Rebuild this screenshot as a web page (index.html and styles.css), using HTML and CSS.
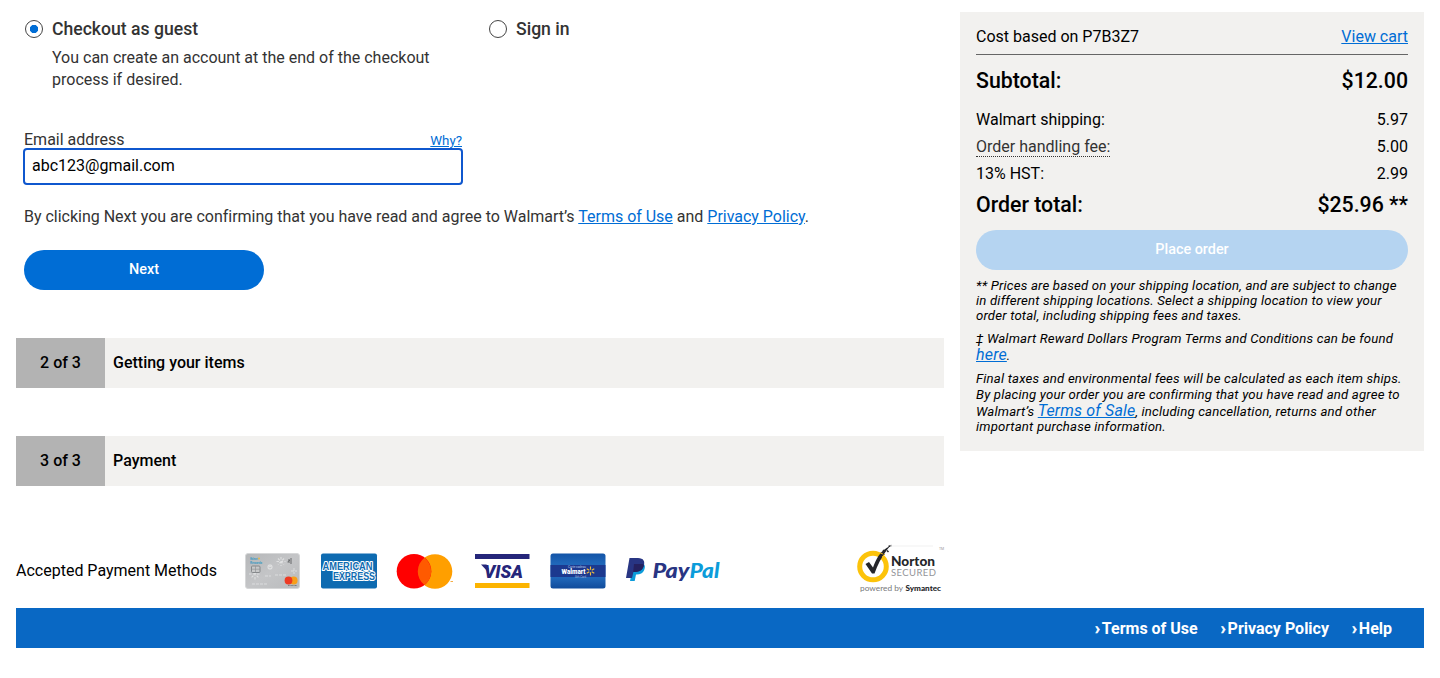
FILE: index.html
```html
<!DOCTYPE html>
<html lang="en">
<head>
<meta charset="utf-8">
<title>Checkout</title>
<link rel="stylesheet" href="styles.css">
</head>
<body>
<div class="page">
  <div class="columns">
    <main class="main">
      <section class="guest">
        <div class="options">
          <div class="option">
            <span class="radio radio-on"></span>
            <div>
              <div class="option-title">Checkout as guest</div>
              <p class="option-note">You can create an account at the end of the checkout process if desired.</p>
            </div>
          </div>
          <div class="option">
            <span class="radio"></span>
            <div class="option-title">Sign in</div>
          </div>
        </div>
        <div class="field">
          <div class="field-head"><label for="email">Email address</label><a class="why" href="#">Why?</a></div>
          <input class="field-input" id="email" type="text" value="abc123@gmail.com">
        </div>
        <p class="agree">By clicking Next you are confirming that you have read and agree to Walmart’s <a href="#">Terms of Use</a> and <a href="#">Privacy Policy</a>.</p>
        <button class="btn btn-next">Next</button>
      </section>
      <div class="step"><span class="step-num">2 of 3</span><span class="step-name">Getting your items</span></div>
      <div class="step"><span class="step-num">3 of 3</span><span class="step-name">Payment</span></div>
      <div class="payments">
        <span class="payments-label">Accepted Payment Methods</span>
        <svg class="card" width="56" height="36" viewBox="0 0 56 36">
          <defs><linearGradient id="silver" x1="0" x2="1" y1="0" y2="1"><stop offset="0" stop-color="#b5b7b9"/><stop offset=".5" stop-color="#c4c5c7"/><stop offset="1" stop-color="#b9bbbd"/></linearGradient></defs>
          <rect x=".5" y=".5" width="54" height="35" rx="2.5" fill="url(#silver)" stroke="#d6d7d8"/>
          <g stroke="#dfe0e1" stroke-width="1.1">
            <path d="M36 4v9M31.500 8.500h9M33 5.500l6 6M39 5.500l-6 6M10 16v11M4 21h12M6 17l8 8M14 17l-8 8M25 11v6M22 14h6M23 12l4 4M27 12l-4 4" stroke-dasharray="2.500 1.500"/>
            <path d="M49 15v6M46 18h6M20 23h6M30 22h12M7 31h16" stroke-dasharray="3 1" stroke-width=".9"/>
          </g>
          <rect x="6.500" y="13" width="8.500" height="6.500" rx="1" fill="#c8c9ca" stroke="#85888a"/>
          <path d="M10.500 13v6.500M6.500 16.200h8.500" stroke="#929496" stroke-width=".7"/>
          <text x="5" y="6.700" font-size="3.500" font-weight="700" fill="#3e9ac1" textLength="8" lengthAdjust="spacingAndGlyphs">Walmart</text>
          <text x="5" y="10.500" font-size="3.500" font-weight="700" fill="#3e9ac1" textLength="12" lengthAdjust="spacingAndGlyphs">Rewards</text>
          <circle cx="14" cy="5.500" r="1" fill="#e2b84f"/>
          <path d="M42.500 9l2.500-2M44 10V6M46 11V5" stroke="#66696b"/>
          <circle cx="48.700" cy="27.500" r="3.900" fill="#f79f1a"/><circle cx="43.500" cy="27.500" r="3.900" fill="#ed3a23"/>
          <path d="M43 32.500h9" stroke="#6b6d6f" stroke-width=".8" stroke-dasharray="1 .4"/>
        </svg>
        <svg class="card" width="56" height="36" viewBox="0 0 56 36">
          <rect y=".5" width="56" height="35" rx="2" fill="#0e6bb1"/>
          <g class="amex" fill="#0e6bb1" stroke="#fff" stroke-width="2.200" stroke-linejoin="round">
            <text x="1.500" y="16.500" textLength="50" lengthAdjust="spacingAndGlyphs">AMERICAN</text>
            <text x="12" y="27" textLength="42" lengthAdjust="spacingAndGlyphs">EXPRESS</text>
          </g>
        </svg>
        <svg class="card" width="56" height="36" viewBox="0 0 56 36">
          <circle cx="38" cy="18.500" r="17.300" fill="#ff9f00"/><circle cx="17" cy="18.200" r="17.300" fill="#f00"/>
          <path d="M27.500 4.700a17.300 17.300 0 0 1 0 27.400a17.300 17.300 0 0 1 0-27.400z" fill="#ff5a00"/>
          <path d="M53.500 28.500h2.500" stroke="#f5ad45"/>
        </svg>
        <svg class="card" width="56" height="36" viewBox="0 0 56 36">
          <rect x="1" y="1" width="54.500" height="5" fill="#25267a"/><rect x="1" y="30" width="54.500" height="5" fill="#fcb400"/>
          <path d="M7 11.500h5.500l2 4v4z" fill="#25267a"/>
          <text x="10" y="24.800" font-size="18" font-weight="900" font-style="italic" fill="#25267a" textLength="39" lengthAdjust="spacingAndGlyphs">VISA</text>
        </svg>
        <svg class="card" width="56" height="36" viewBox="0 0 56 36">
          <defs><linearGradient id="gift" x1="0" x2="0" y1="0" y2="1"><stop offset="0" stop-color="#1354a7"/><stop offset=".28" stop-color="#2067b9"/><stop offset=".7" stop-color="#2067b9"/><stop offset="1" stop-color="#104b9b"/></linearGradient></defs>
          <rect x=".5" y=".5" width="55" height="35" rx="2.500" fill="url(#gift)"/>
          <rect x=".5" y="12" width="55" height="12" fill="#1c398f"/>
          <text x="18" y="15" font-size="3.500" fill="#b9cbe8" textLength="18" lengthAdjust="spacingAndGlyphs">Carte cadeau</text>
          <text x="11.500" y="21" font-size="7" font-weight="900" fill="#fff" textLength="24" lengthAdjust="spacingAndGlyphs">Walmart</text>
          <text x="25" y="24.500" font-size="3.500" fill="#a8bddf" textLength="11" lengthAdjust="spacingAndGlyphs">Gift Card</text>
          <path d="M40.500 13.500v3.200M40.500 19.300v3.200M36.700 15.800l2.600 1.500M41.700 18.700l2.600 1.500M36.700 20.200l2.600-1.500M41.700 17.300l2.600-1.500" stroke="#f2bd3d" stroke-width="1.100"/>
        </svg>
        <svg class="paypal" width="96" height="36" viewBox="0 0 96 36">
          <path d="M9 9h7c4.500 2 4.500 5 3 8.500c-1.300 3.200-4.300 4.200-8 4l-1.300 6.500H5z" fill="#0c9cda"/>
          <path d="M4.500 5h8.500c5.500 0 7.500 3.500 5.500 8.500c-1.500 4.200-5 5.500-10 5.300L7 25H1z" fill="#283583"/>
          <path d="M9 11h8.500c1.300.500 1.600 1.500 1.100 2.700c-1.700 4-5 5.400-10.400 5.200z" fill="#25215f"/>
          <text class="geo" y="24.500" font-size="20" font-weight="900" font-style="italic"><tspan x="27.500" fill="#283583" textLength="37" lengthAdjust="spacingAndGlyphs">Pay</tspan><tspan x="64.500" fill="#0c9cda" textLength="30" lengthAdjust="spacingAndGlyphs">Pal</tspan></text>
        </svg>
        <svg class="norton" width="88" height="50" viewBox="0 0 88 50">
          <circle cx="16" cy="21.500" r="13.300" fill="#fff" stroke="#fcc30a" stroke-width="5"/>
          <path d="M8.500 19l3.500-2l4 5.500C19 14 23 7 29.500 3L33 1l-3.500 4.500C24.500 12 20.500 20 17.500 28.500h-2.500z" fill="#25262a"/>
          <path d="M23.500 8l1.500 1.500M26 5l2 2M30 5.500l1.500 1.500M31.500 1.500l3-1" stroke="#25262a" stroke-width="1.500"/>
          <path d="M25 12l3-3M23 8l3 1" stroke="#dba91c"/>
          <path d="M33 1h43" stroke="#f1f1f1"/>
          <text class="geo" x="34" y="21" font-size="13.500" font-weight="900" fill="#25262a" textLength="44" lengthAdjust="spacingAndGlyphs">Norton</text>
          <text class="geo" x="34" y="30.500" font-size="9.500" fill="#939498" textLength="45">SECURED</text>
          <text x="82" y="5" font-size="3.500" fill="#999">TM</text>
          <text class="geo" y="46.300" font-size="7.500"><tspan x="3" fill="#77787b" textLength="43" lengthAdjust="spacingAndGlyphs">powered by</tspan><tspan x="48.500" fill="#25262a" font-weight="900" textLength="35.500" lengthAdjust="spacingAndGlyphs">Symantec</tspan></text>
        </svg>
      </div>
    </main>
    <aside class="summary">
      <div class="row row-cost"><span>Cost based on P7B3Z7</span><a href="#">View cart</a></div>
      <div class="row row-sub"><span>Subtotal:</span><span>$12.00</span></div>
      <div class="row"><span>Walmart shipping:</span><span>5.97</span></div>
      <div class="row"><span class="fee">Order handling fee:</span><span>5.00</span></div>
      <div class="row"><span>13% HST:</span><span>2.99</span></div>
      <div class="row row-total"><span>Order total:</span><span>$25.96 **</span></div>
      <button class="btn btn-place">Place order</button>
      <div class="notes">
        <p>** Prices are based on your shipping location, and are subject to change in different shipping locations. Select a shipping location to view your order total, including shipping fees and taxes.</p>
        <p>‡ Walmart Reward Dollars Program Terms and Conditions can be found <a href="#">here</a>.</p>
        <p>Final taxes and environmental fees will be calculated as each item ships. By placing your order you are confirming that you have read and agree to Walmart’s <a href="#">Terms of Sale</a>, including cancellation, returns and other important purchase information.</p>
      </div>
    </aside>
  </div>
  <footer class="footer">
    <a href="#"><span class="chev">›</span>Terms of Use</a>
    <a href="#"><span class="chev">›</span>Privacy Policy</a>
    <a href="#"><span class="chev">›</span>Help</a>
  </footer>
</div>
</body>
</html>
```

FILE: styles.css
```css
* { box-sizing: border-box; }
body { margin: 0; background: #fff; color: #000; font: 16px/22px Roboto, sans-serif; }
p { margin: 0; }
a { color: #006dd5; text-decoration: underline; }
.page { padding: 0 16px; }
.columns { display: flex; align-items: flex-start; gap: 16px; height: 608px; }
.main { width: 928px; }
.guest { height: 338px; padding: 18px 8px 0; color: #333; }
.options { display: flex; height: 111px; }
.option { display: flex; flex: none; width: 464px; gap: 9px; padding-left: 1px; }
.radio { flex: none; width: 18px; height: 18px; margin-top: 2px; border: 1px solid #444; border-radius: 50%; }
.radio-on { background: radial-gradient(circle, #006dd5 0 3.8px, #fff 4.5px); }
.option-title { font-size: 17.6px; font-weight: 500; }
.option-note { width: 390px; margin-top: 7px; }
.field { width: 440px; margin-left: -1px; }
.field-head { display: flex; justify-content: space-between; height: 19px; padding: 0 1px; }
.why { font-size: 13.3px; line-height: 24px; }
.field-input { display: block; width: 100%; height: 37px; padding: 0 7px 3px; border: 2px solid #0f57ce; border-radius: 4px; outline: 0; background: #fff; color: #000; font: inherit; }
.agree { margin-top: 21px; letter-spacing: -.01px; }
.btn { display: block; height: 40px; padding: 0; border: 0; border-radius: 20px; color: #fff; font: 500 14.4px/38px Roboto, sans-serif; }
.btn-next { width: 240px; margin-top: 22px; background: #006dd5; }
.step { display: flex; height: 50px; margin-bottom: 48px; background: #f2f1ef; font-weight: 500; line-height: 50px; }
.step-num { width: 89px; background: #b3b3b3; text-align: center; }
.step-name { padding-left: 8px; }
.payments { display: flex; align-items: center; height: 74px; }
.payments-label { width: 228.500px; }
.card { flex: none; margin-right: 20.400px; overflow: visible; }
.paypal { margin-left: -1px; }
.norton { margin: 0 -1px 3px auto; overflow: visible; }
svg text { font-family: Roboto, sans-serif; }
svg text.geo { font-family: Lato, sans-serif; }
.amex text { font: 700 10px "Liberation Sans", sans-serif; paint-order: stroke; }
.summary { width: 464px; height: 439px; margin-top: 12px; padding: 11px 16px 0; background: #f2f1ef; }
.row { display: flex; justify-content: space-between; height: 27px; line-height: 27px; }
.row-cost { height: 32px; border-bottom: 1px solid #666; }
.row-sub { height: 51px; line-height: 52px; font-size: 21.3px; font-weight: 500; }
.row-total { height: 43px; line-height: 36px; font-size: 21.3px; font-weight: 500; }
.fee { height: 24px; border-bottom: 1px dotted #333; color: #333; }
.btn-place { width: 100%; background: #b5d4f1; }
.notes { padding-top: 8px; font-size: 13.2px; line-height: 15.1px; font-style: italic; letter-spacing: .18px; }
.notes p { margin-bottom: 8px; }
.notes a { font-size: 16px; line-height: 17px; }
.footer { display: flex; justify-content: flex-end; gap: 23px; height: 40px; padding: 1px 32px 0 0; background: #0968c4; line-height: 40px; }
.footer a { color: #fff; font-weight: 700; text-decoration: none; }
.chev { margin-right: 2px; -webkit-text-stroke: .5px #fff; }
```
